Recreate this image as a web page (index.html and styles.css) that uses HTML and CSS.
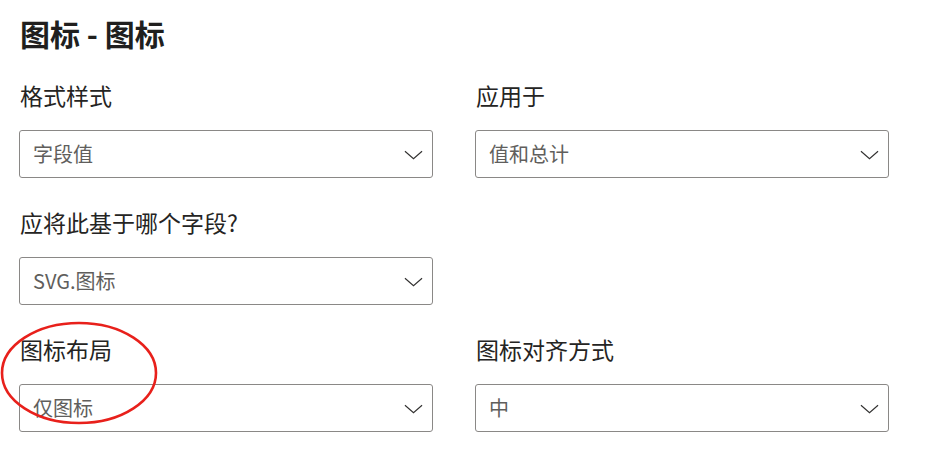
FILE: index.html
```html
<!DOCTYPE html>
<html lang="zh-CN">
<head>
<meta charset="utf-8">
<title>图标 - 图标</title>
<link rel="stylesheet" href="styles.css">
</head>
<body>
<div class="panel">
  <h1 class="title">图标 - 图标</h1>
  <div class="grid">
    <div class="field">
      <div class="label">格式样式</div>
      <div class="select"><span class="value">字段值</span><svg class="chev" viewBox="0 0 20 10"><path d="M1 1 L10 9 L19 1"/></svg></div>
    </div>
    <div class="field">
      <div class="label">应用于</div>
      <div class="select"><span class="value">值和总计</span><svg class="chev" viewBox="0 0 20 10"><path d="M1 1 L10 9 L19 1"/></svg></div>
    </div>
    <div class="field">
      <div class="label">应将此基于哪个字段?</div>
      <div class="select"><span class="value">SVG.图标</span><svg class="chev" viewBox="0 0 20 10"><path d="M1 1 L10 9 L19 1"/></svg></div>
    </div>
    <div class="field empty"></div>
    <div class="field">
      <div class="label">图标布局</div>
      <div class="select"><span class="value">仅图标</span><svg class="chev" viewBox="0 0 20 10"><path d="M1 1 L10 9 L19 1"/></svg></div>
    </div>
    <div class="field">
      <div class="label">图标对齐方式</div>
      <div class="select"><span class="value">中</span><svg class="chev" viewBox="0 0 20 10"><path d="M1 1 L10 9 L19 1"/></svg></div>
    </div>
  </div>
  <svg class="annotation" viewBox="0 0 160 106" width="160" height="106"><ellipse cx="79" cy="52" rx="77" ry="50"/></svg>
</div>
</body>
</html>
```

FILE: styles.css
```css
html, body {
  margin: 0;
  padding: 0;
  background: #ffffff;
}
body {
  font-family: "Noto Sans CJK SC", "Noto Sans", sans-serif;
  color: #252423;
}
.panel {
  position: relative;
  padding: 13px 0 0 19px;
  width: 871px;
}
.title {
  margin: 0;
  font-size: 30px;
  line-height: 40px;
  font-weight: 700;
  color: #201f1e;
  padding-left: 1px;
}
.grid {
  margin-top: 28px;
  display: grid;
  grid-template-columns: 414px 414px;
  column-gap: 42px;
  row-gap: 30px;
}
.field {
  display: flex;
  flex-direction: column;
  gap: 21px;
}
.label {
  font-size: 23px;
  line-height: 28px;
  height: 28px;
  padding-left: 1px;
  color: #252423;
}
.select {
  box-sizing: border-box;
  height: 48px;
  border: 1px solid #8a8886;
  border-radius: 3px;
  display: flex;
  align-items: center;
  justify-content: space-between;
  padding: 0 9px 0 13px;
}
.value {
  font-size: 20px;
  color: #605e5c;
  line-height: 28px;
}
.chev {
  width: 19px;
  height: 10px;
  fill: none;
  stroke: #323130;
  stroke-width: 1.2;
  margin-top: 1px;
}
.annotation {
  position: absolute;
  left: 0;
  top: 321px;
  overflow: visible;
}
.annotation ellipse {
  fill: none;
  stroke: #e8201b;
  stroke-width: 2.6;
}
```
